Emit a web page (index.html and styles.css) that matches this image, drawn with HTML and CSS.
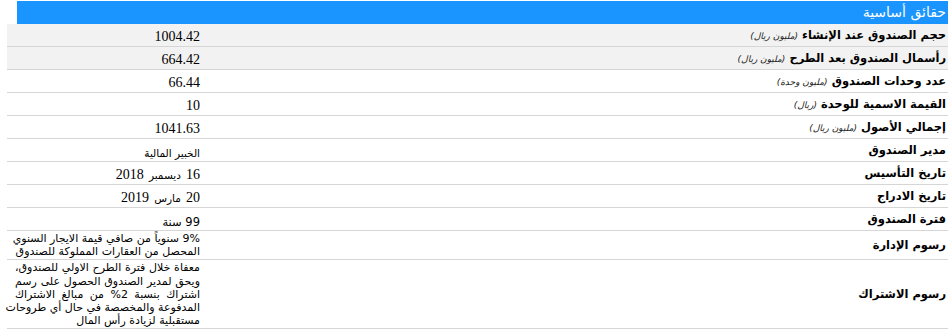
FILE: index.html
```html
<!DOCTYPE html>
<html lang="ar">
<head>
<meta charset="utf-8">
<title>حقائق أساسية</title>
<link rel="stylesheet" href="styles.css">
</head>
<body>
<div class="facts">
  <div class="head" dir="rtl">حقائق أساسية</div>
  <table class="grid" dir="rtl">
    <tr class="shade"><th>حجم الصندوق عند الإنشاء <span class="unit">(مليون ريال)</span></th><td><span class="num">1004.42</span></td></tr>
    <tr class="shade"><th>رأسمال الصندوق بعد الطرح <span class="unit">(مليون ريال)</span></th><td><span class="num">664.42</span></td></tr>
    <tr><th>عدد وحدات الصندوق <span class="unit">(مليون وحدة)</span></th><td><span class="num">66.44</span></td></tr>
    <tr><th>القيمة الاسمية للوحدة <span class="unit">(ريال)</span></th><td><span class="num">10</span></td></tr>
    <tr><th>إجمالي الأصول <span class="unit">(مليون ريال)</span></th><td><span class="num">1041.63</span></td></tr>
    <tr><th>مدير الصندوق</th><td class="top"><span class="ar">الخبير المالية</span></td></tr>
    <tr><th>تاريخ التأسيس</th><td><span class="num">16</span> <span class="ar">ديسمبر</span> <span class="num">2018</span></td></tr>
    <tr><th>تاريخ الادراج</th><td><span class="num">20</span> <span class="ar">مارس</span> <span class="num">2019</span></td></tr>
    <tr><th>فترة الصندوق</th><td class="top"><span class="ar big">99 سنة</span></td></tr>
    <tr><th>رسوم الإدارة</th><td class="para">
      <span class="ln">9% سنوياً من صافي قيمة الايجار السنوي</span>
      <span class="ln last">المحصل من العقارات المملوكة للصندوق</span>
    </td></tr>
    <tr><th>رسوم الاشتراك</th><td class="para">
      <span class="ln">معفاة خلال فترة الطرح الاولي للصندوق،</span>
      <span class="ln">ويحق لمدير الصندوق الحصول على رسم</span>
      <span class="ln">اشتراك بنسبة 2% من مبالغ الاشتراك</span>
      <span class="ln">المدفوعة والمخصصة في حال أي طروحات</span>
      <span class="ln last">مستقبلية لزيادة رأس المال</span>
    </td></tr>
  </table>
</div>
</body>
</html>
```

FILE: styles.css
```css
html, body {
  margin: 0;
  padding: 0;
  background: #ffffff;
  overflow: hidden;
}
body {
  width: 948px;
  height: 333px;
}
.facts {
  margin: 1px 0 0 7px;
  width: 941px;
}
.head {
  margin-left: 10px;
  height: 23px;
  line-height: 22px;
  background: #1a94fe;
  color: #ffffff;
  font-family: "DejaVu Sans", sans-serif;
  font-weight: normal;
  font-size: 14px;
  padding-right: 2px;
  text-align: right;
}
.grid {
  width: 100%;
  table-layout: fixed;
  border-collapse: collapse;
  font-family: "DejaVu Sans", sans-serif;
  color: #000;
}
.grid tr {
  border-bottom: 1px solid #d6d6d6;
}
.grid tr.shade {
  background: #f2f2f2;
}
.grid th {
  text-align: right;
  font-weight: bold;
  font-size: 11.5px;
  height: 22px;
  padding: 0 2px 0 0;
  vertical-align: middle;
  white-space: nowrap;
}
.unit {
  font-weight: normal;
  font-style: italic;
  font-size: 9px;
  color: #222;
}
.grid td {
  width: 185px;
  padding: 0 5px 0 8px;
  text-align: right;
  vertical-align: middle;
  height: 22px;
  white-space: nowrap;
}
.grid td.top {
  vertical-align: top;
  padding-top: 3px;
  height: 19px;
}
.num {
  font-family: "Liberation Serif", serif;
  font-size: 14px;
}
.ar {
  font-size: 10.5px;
}
.ar.big {
  font-size: 11.5px;
}
.grid td.para {
  white-space: normal;
  padding-top: 1px;
  padding-bottom: 1px;
  font-size: 11px;
  letter-spacing: -0.55px;
  line-height: 13.2px;
  vertical-align: top;
}
.ln {
  display: block;
  text-align: justify;
  text-align-last: justify;
  white-space: nowrap;
}
.ln.last {
  text-align-last: right;
}
```
